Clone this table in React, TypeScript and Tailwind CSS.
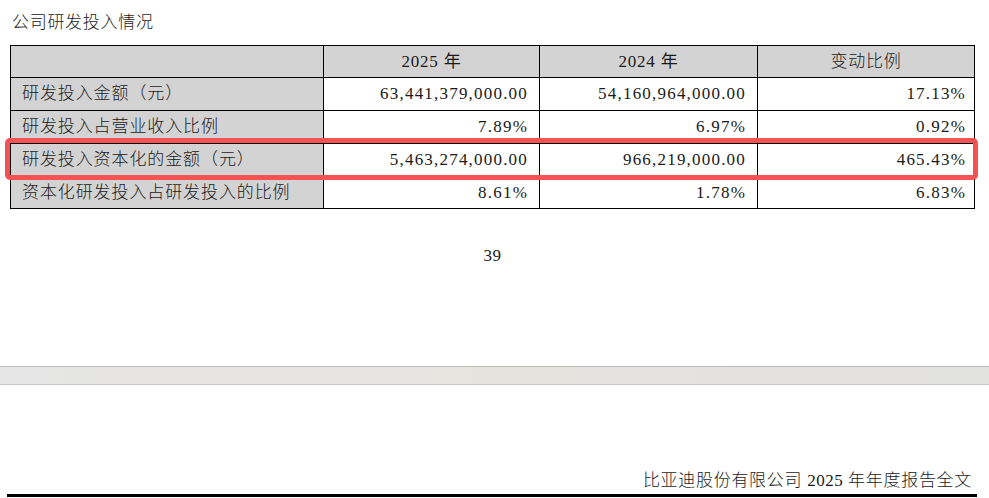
import React from "react";

const FONT = { fontFamily: '"Liberation Serif", "Noto Sans CJK SC", serif' };

const rows = [
  ["研发投入金额（元）", "63,441,379,000.00", "54,160,964,000.00", "17.13%", "h-[33px]"],
  ["研发投入占营业收入比例", "7.89%", "6.97%", "0.92%", "h-[33px]"],
  ["研发投入资本化的金额（元）", "5,463,274,000.00", "966,219,000.00", "465.43%", "h-[33px]"],
  ["资本化研发投入占研发投入的比例", "8.61%", "1.78%", "6.83%", "h-[32px]"],
];

export default function App() {
  return (
    <div
      className="relative w-[989px] h-[498px] overflow-hidden bg-white text-[#1a1a1a] text-[17px]"
      style={FONT}
    >
      <div className="flex flex-col">
        <div className="h-[45px] pl-[12px] pt-[10px] leading-[26px] font-light tracking-[0.7px]">公司研发投入情况</div>
        <table className="ml-[10px] w-[964px] border-collapse table-fixed">
          <colgroup>
            <col className="w-[313px]" />
            <col className="w-[216px]" />
            <col className="w-[218px]" />
            <col className="w-[217px]" />
          </colgroup>
          <thead>
            <tr className="h-[32px] bg-[#d3d3d3]">
              <th className="border border-black font-normal p-0"></th>
              <th className="border border-black font-normal text-center tracking-[0.8px] p-0">2025 年</th>
              <th className="border border-black font-normal text-center tracking-[0.8px] p-0">2024 年</th>
              <th className="border border-black font-light text-center tracking-[0.7px] p-0">变动比例</th>
            </tr>
          </thead>
          <tbody>
            {rows.map((r, i) => (
              <tr key={i} className={r[4]}>
                <td className="border border-black bg-[#d3d3d3] pl-[11px] py-0 font-light whitespace-nowrap tracking-[0.9px]">{r[0]}</td>
                <td className="border border-black text-right pr-[11px] py-0 tracking-[1.2px]">{r[1]}</td>
                <td className="border border-black text-right pr-[11px] py-0 tracking-[1.2px]">{r[2]}</td>
                <td className="border border-black text-right pr-[8px] py-0 tracking-[1.2px]">{r[3]}</td>
              </tr>
            ))}
          </tbody>
        </table>
        <div className="h-[37px]"></div>
        <div className="text-center h-[20px] leading-[20px] tracking-[0.5px] pr-[4px]">39</div>
        <div className="h-[100px]"></div>
        <div className="h-[19px] border-t border-b border-t-[#bcbcba] border-b-[#c6c6c6] bg-gradient-to-r from-[#e6e6e6] via-[#e6e3df] to-[#e2e2e0]"></div>
        <div className="h-[109px] flex items-end justify-end pr-[17px] pb-[3px]">
          <span className="leading-[20px] font-light tracking-[0.7px]">比亚迪股份有限公司 <span className="font-normal tracking-[0.5px]">2025</span> 年年度报告全文</span>
        </div>
        <div className="ml-[7px] w-[970px] h-[3px] bg-black"></div>
      </div>
      <div className="absolute left-[5px] top-[138px] w-[973px] h-[42px] border-[5px] border-[#f55353] rounded-[5px]"></div>
    </div>
  );
}
